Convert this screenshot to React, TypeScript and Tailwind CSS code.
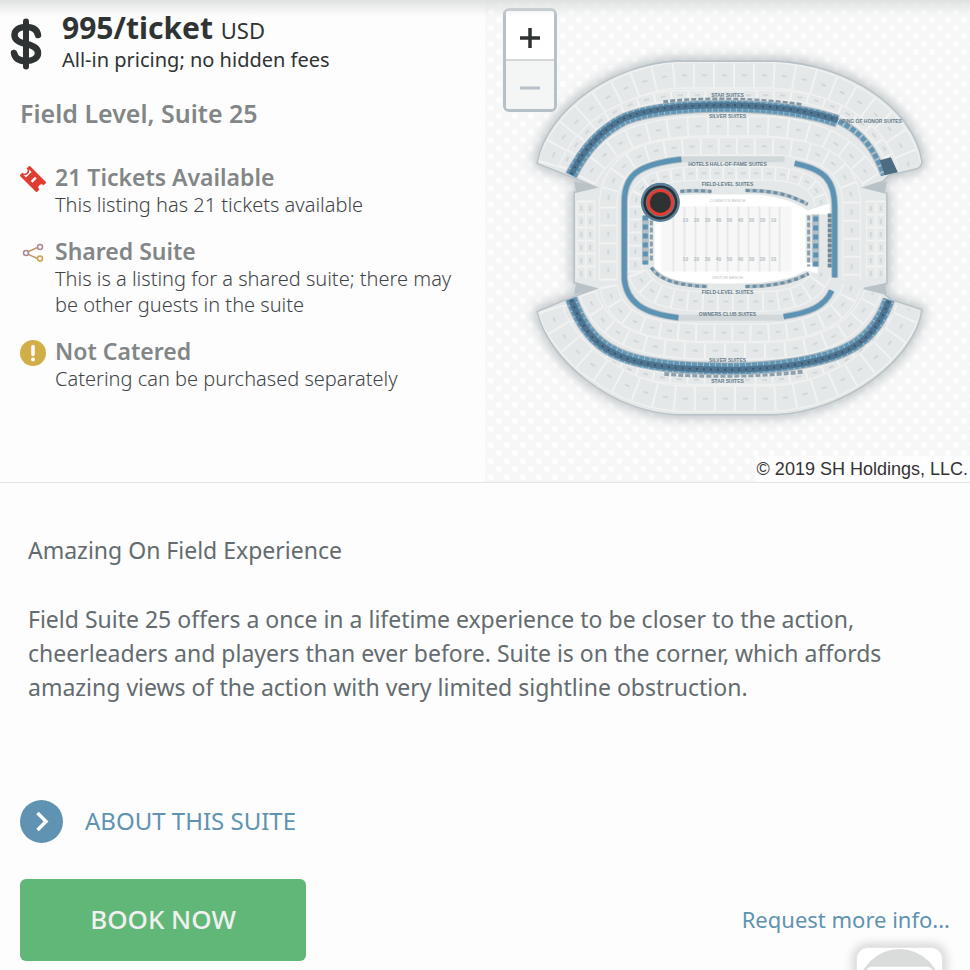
import { useState } from 'react';
import type { ReactNode } from 'react';

const TOP_BAND = 'M572 175 C584 151 601 131 625 119 C652 108 690 106 725 106 C768 106 805 110 838 121';
const HONOR_BAND = 'M839 121 C862 132 875 149 884 175';
const BOTTOM_BAND = 'M572 298 C581 322 593 341 616 352 C644 366 690 368 735 368 C783 367 822 360 844 350 C867 340 881 322 889 299';
const OUTLINE =
  'M538 163 C548 108 615 64 676 61 H776 C848 64 914 108 922 161 Q922 168 915 169 L889 175 L883 181 L864 187 L887 193 V283 L864 288 L884 293 L891 299 L922 309 C915 358 848 410 776 414 H676 C610 409 550 360 538 311 L567 299 L597 288 L575 282 V192 L597 187 L576 178 Z';

interface RowProps {
  d: string;
  width: number;
  step: number;
}

// One row of seating blocks: dividers plus a section mark in each block
function SeatRow({ d, width, step }: RowProps) {
  return (
    <g fill="none">
      <path d={d} stroke="#eff0f0" strokeWidth={width + 3} />
      <path d={d} stroke="#e5e8e8" strokeWidth={width} />
      <path d={d} stroke="#f1f2f2" strokeWidth={width} strokeDasharray={`2 ${step - 2}`} />
      <path d={d} stroke="#d3d7d8" strokeWidth="2" strokeDasharray={`5 ${step - 5}`} strokeDashoffset={-(step / 2 - 1)} />
    </g>
  );
}

const ROWS: RowProps[] = [
  { d: 'M551 165 C563 119 622 78 680 75 H772 C836 78 896 114 909 166', width: 24, step: 20 },
  { d: 'M564 168 C580 128 620 98 680 95 H780 C838 98 878 125 894 168', width: 8, step: 17 },
  { d: 'M587 180 C603 147 632 128 700 126 H765 C820 128 850 145 873 182', width: 18, step: 20 },
  { d: 'M609 280 V200 C613 160 645 147 700 146 H770 C820 148 848 162 852 200 V280', width: 16, step: 18 },
  { d: 'M636 272 V203 C640 180 660 174 700 173 H765 C800 174 818 181 822 204', width: 12, step: 13 },
  { d: 'M638 272 C646 294 670 300 705 301 H760 C795 301 815 292 822 272', width: 18, step: 15 },
  { d: 'M609 285 C616 320 645 331 700 332 H765 C815 330 845 315 852 285', width: 16, step: 18 },
  { d: 'M588 292 C602 334 640 349 700 350 H765 C820 349 858 332 873 292', width: 15, step: 20 },
  { d: 'M564 305 C581 355 630 377 690 379 H770 C830 377 880 348 896 306', width: 8, step: 17 },
  { d: 'M551 308 C564 351 622 395 682 398 H772 C838 395 896 352 909 308', width: 24, step: 20 },
  { d: 'M582 200 V278', width: 7, step: 13 },
  { d: 'M591 200 V278', width: 7, step: 13 },
  { d: 'M871 200 V278', width: 7, step: 13 },
  { d: 'M881 200 V278', width: 7, step: 13 },
];

const LABELS = [
  { x: 728, y: 97, text: 'STAR SUITES' },
  { x: 728, y: 118, text: 'SILVER SUITES' },
  { x: 872, y: 123, text: 'RING OF HONOR SUITES' },
  { x: 728, y: 166, text: 'HOTELS HALL-OF-FAME SUITES' },
  { x: 728, y: 186, text: 'FIELD-LEVEL SUITES' },
  { x: 728, y: 293, text: 'FIELD-LEVEL SUITES' },
  { x: 728, y: 315, text: 'OWNERS CLUB SUITES' },
  { x: 728, y: 361, text: 'SILVER SUITES' },
  { x: 728, y: 382, text: 'STAR SUITES' },
];

const YARDS = [10, 20, 30, 40, 50, 40, 30, 20, 10];

// darkShift moves the dark lane towards the outside of the bowl
function SuiteBand({ d, darkShift }: { d: string; darkShift: number }) {
  return (
    <g fill="none">
      <path d={d} stroke="#aebac2" strokeWidth="13" />
      <path d={d} stroke="#6197b7" strokeWidth="11" strokeDasharray="5 1" />
      <g transform={`translate(0 ${darkShift})`}>
        <path d={d} stroke="#4d7592" strokeWidth="6" />
        <path d={d} stroke="#3e566a" strokeWidth="2" strokeDasharray="2 5" />
      </g>
    </g>
  );
}

function StadiumMap() {
  return (
    <svg viewBox="486 0 484 481" className="block w-full" role="img" aria-label="Stadium seating map">
      <defs>
        <pattern id="dots" width="16" height="16" patternUnits="userSpaceOnUse">
          <rect width="16" height="16" fill="#f7f7f7" />
          <circle cx="4" cy="4" r="3" fill="#fefefe" />
          <circle cx="12" cy="12" r="3" fill="#fefefe" />
        </pattern>
        <filter id="glow" x="-10%" y="-10%" width="120%" height="120%">
          <feGaussianBlur stdDeviation="6" />
        </filter>
        <clipPath id="bowl">
          <path d={OUTLINE} />
        </clipPath>
      </defs>
      <rect x="486" width="484" height="482" fill="url(#dots)" />
      <path d={OUTLINE} fill="#a6afb3" stroke="#a6afb3" strokeWidth="7" filter="url(#glow)" opacity="0.75" />
      <path d={OUTLINE} fill="#e5e8e8" />
      <g clipPath="url(#bowl)">
        {ROWS.map(row => <SeatRow key={row.d} {...row} />)}
      </g>
      <path d={OUTLINE} fill="none" stroke="#b9c2c7" strokeWidth="1.5" />
      <path d="M575 181 L598 187 L577 192 Z M577 283 L598 288 L575 294 Z M887 181 L864 187 L885 192 Z M885 283 L864 288 L887 294 Z" fill="#b9c2c7" />

      {/* Upper and lower suites */}
      <path d="M664 102 C700 98 755 98 803 105" fill="none" stroke="#8195a3" strokeWidth="4" strokeDasharray="5 2" />
      <path d="M665 373 C700 376 755 376 803 371" fill="none" stroke="#8fa1ad" strokeWidth="4" strokeDasharray="5 2" />
      <SuiteBand d={TOP_BAND} darkShift={-1} />
      <SuiteBand d={BOTTOM_BAND} darkShift={1} />
      <path d={HONOR_BAND} fill="none" stroke="#b0bcc4" strokeWidth="7" />
      <path d={HONOR_BAND} fill="none" stroke="#5f95b5" strokeWidth="5" strokeDasharray="5 2" />
      <path d="M880 160 L891 157 L898 172 L885 175 Z" fill="#4c6c82" />

      {/* Club ring */}
      <g fill="none">
        <path d="M682 159 H785 M678 317 H784" stroke="#d2d7d9" strokeWidth="6" />
        <g stroke="#b4c0c8" strokeWidth="7">
          <path d="M682 159 C638 164 625 175 625 202 V278 C627 301 643 313 679 317" />
          <path d="M795 163 C825 169 835 180 835 207 V277 M832 290 C825 306 810 312 784 316" />
        </g>
        <g stroke="#5b93b4" strokeWidth="5">
          <path d="M682 159 C638 164 625 175 625 202 V278 C627 301 643 313 679 317" />
          <path d="M795 163 C825 169 835 180 835 207 V277 M832 290 C825 306 810 312 784 316" />
        </g>
      </g>

      {/* Field */}
      <path d="M655 210 C660 198 672 194 700 194 H752 C782 195 798 204 808 210 L830 203 V214 H806 V262 H818 V273 L806 270 C790 280 765 283 728 283 C690 283 666 281 655 266 Z" fill="#ffffff" />
      <rect x="662" y="206" width="130" height="65" fill="#f7f7f7" />
      <path d="M674 206 V271 M685 206 V271 M696 206 V271 M707 206 V271 M718 206 V271 M728 206 V271 M739 206 V271 M749 206 V271 M760 206 V271 M770 206 V271 M780 206 V271" stroke="#e7e9e9" strokeWidth="2" />
      <g fontSize="5" fontWeight="700" fill="#b5bdc2" textAnchor="middle" fontFamily="Liberation Sans, sans-serif">
        {YARDS.map((yard, i) => (
          <g key={i}>
            <text x={686 + i * 11} y="222">{yard}</text>
            <text x={686 + i * 11} y="260">{yard}</text>
          </g>
        ))}
        <text x="728" y="202" fontSize="4" fontWeight="400">COWBOYS BENCH</text>
        <text x="728" y="278" fontSize="4" fontWeight="400">VISITOR BENCH</text>
      </g>
      <g fill="none" strokeWidth="4">
        <path d="M681 191 C690 190 700 190 712 191 M746 190 C775 190 792 195 808 204" stroke="#b3bfc6" />
        <path d="M652 267 C660 280 680 285 708 286 M746 286 C775 286 794 281 809 273" stroke="#b3bfc6" />
        <path d="M681 191 C690 190 700 190 712 191 M746 190 C775 190 792 195 808 204" stroke="#6d8fa5" strokeWidth="3" strokeDasharray="4 3" />
        <path d="M652 267 C660 280 680 285 708 286 M746 286 C775 286 794 281 809 273" stroke="#6d8fa5" strokeWidth="3" strokeDasharray="4 3" />
        <path d="M646 215 V264 M816 214 V266" stroke="#b3bfc6" strokeWidth="7" />
        <path d="M646 215 V264 M816 216 V266" stroke="#5b93b4" strokeWidth="5" strokeDasharray="5 4" />
        <path d="M652 220 V262 M809 215 V266" stroke="#8c9ea9" strokeWidth="3" strokeDasharray="5 2" />
        <path d="M830 213 V267" stroke="#6d8798" strokeWidth="4" strokeDasharray="4 1" />
      </g>

      <g fontSize="5" fontWeight="700" fill="#667c8a" textAnchor="middle" fontFamily="Liberation Sans, sans-serif">
        {LABELS.map(l => <text key={l.y} x={l.x} y={l.y}>{l.text}</text>)}
      </g>

      {/* Selected suite */}
      <circle cx="661" cy="202" r="19.5" fill="#587e99" />
      <circle cx="661" cy="202" r="17" fill="#2b3033" />
      <circle cx="661" cy="202" r="14.5" fill="#587e99" />
      <circle cx="661" cy="202" r="13.5" fill="#e13d30" />
      <circle cx="661" cy="202" r="10.5" fill="#2f3232" />
    </svg>
  );
}

function DollarIcon() {
  return (
    <svg width="32" height="52" viewBox="0 0 32 52" fill="none" stroke="#2f3333" strokeLinecap="round" aria-hidden="true">
      <path d="M16 3.500 V48.500" strokeWidth="6" />
      <path d="M28 17 C27 11 22 9 16 9 C9 9 4.500 12 4.500 17 C4.500 22.500 9 24.500 16 26 C23 27.500 28 29.500 28 35 C28 40 23 43 16 43 C9 43 5 40 4 35" strokeWidth="6.500" />
    </svg>
  );
}

function TicketIcon() {
  return (
    <svg width="26" height="26" viewBox="0 0 26 26" aria-hidden="true">
      <g transform="rotate(45 13 13)">
        <path d="M1 6 H25 V10 A3 3 0 0 0 25 16 V20 H1 V16 A3 3 0 0 0 1 10 Z" fill="#e03c31" />
        <path d="M3.500 9 H7 V17 H3.500 C6.500 15 6.500 11 3.500 9 Z" fill="#fdfdfd" />
        <path d="M14 10 V16" stroke="#fdfdfd" strokeWidth="2.500" />
      </g>
    </svg>
  );
}

function ShareIcon() {
  return (
    <svg width="26" height="26" viewBox="0 0 26 26" fill="none" strokeWidth="1.500" aria-hidden="true">
      <path d="M7.500 12 L17.500 7.500 M7.500 14 L17.500 18.500" stroke="#c29a6a" />
      <circle cx="6" cy="13" r="2.500" stroke="#a8899a" />
      <circle cx="20" cy="7" r="2.500" stroke="#a8899a" />
      <circle cx="20" cy="18.500" r="2.500" stroke="#cba04a" />
    </svg>
  );
}

function NoticeIcon() {
  return (
    <svg width="26" height="26" viewBox="0 0 26 26" aria-hidden="true">
      <circle cx="13" cy="13" r="13" fill="#d2ae48" />
      <path d="M13 6.500 V14.500" stroke="#fff" strokeWidth="3.500" strokeLinecap="round" />
      <circle cx="13" cy="19.500" r="2" fill="#fff" />
    </svg>
  );
}

function Feature({ icon, title, children }: { icon: ReactNode; title: string; children: ReactNode }) {
  return (
    <li className="flex gap-[9px]">
      <span className="shrink-0 pt-1">{icon}</span>
      <div>
        <h3 className="text-[23px] leading-[30px] font-semibold text-[#828686]">{title}</h3>
        <p className="text-[20px] leading-[26px] font-light text-[#3d4447]">{children}</p>
      </div>
    </li>
  );
}

export default function App() {
  const [zoom, setZoom] = useState(0);

  return (
    <div className="relative min-h-screen overflow-hidden bg-[#fdfdfd] font-['Noto_Sans',sans-serif]">
      <div className="pointer-events-none absolute inset-x-0 top-0 z-10 h-4 bg-linear-to-b from-[#dfe1e1] to-transparent" />

      <section className="grid grid-cols-2 border-b border-[#e2e4e4]">
        <div className="px-5 pt-3">
          <div className="-ml-[10px] flex gap-5">
            <span className="shrink-0 pt-1.5"><DollarIcon /></span>
            <div className="text-[#2f3333]">
              <p className="text-[30px] leading-8 font-bold">995/ticket <span className="text-[22px] font-normal">USD</span></p>
              <p className="text-[20px] leading-7">All-in pricing; no hidden fees</p>
            </div>
          </div>
          <h2 className="mt-[23px] text-[25px] leading-8 font-semibold text-[#828686]">Field Level, Suite 25</h2>
          <ul className="mt-[33px] space-y-[18px]">
            <Feature icon={<TicketIcon />} title="21 Tickets Available">This listing has 21 tickets available</Feature>
            <Feature icon={<ShareIcon />} title="Shared Suite">This is a listing for a shared suite; there may be other guests in the suite</Feature>
            <Feature icon={<NoticeIcon />} title="Not Catered">Catering can be purchased separately</Feature>
          </ul>
        </div>

        <div className="relative">
          <StadiumMap />
          <div className="absolute top-2 left-[18px] w-[54px] overflow-hidden rounded-md border-3 border-[#b6c0c7]">
            <button
              aria-label="Zoom in"
              onClick={() => setZoom(zoom + 1)}
              className="flex h-[50px] w-full items-center justify-center border-b-2 border-[#d3d7d9] bg-white pt-1.5"
            >
              <svg width="22" height="22" viewBox="0 0 22 22" stroke="#2f3333" strokeWidth="3.500"><path d="M1 11 H21 M11 1 V21" /></svg>
            </button>
            <button
              aria-label="Zoom out"
              onClick={() => setZoom(Math.max(0, zoom - 1))}
              className="flex h-12 w-full items-center justify-center bg-[#f4f5f5] pt-1.5"
            >
              <svg width="22" height="22" viewBox="0 0 22 22" stroke="#b6c0c7" strokeWidth="3"><path d="M1 11 H21" /></svg>
            </button>
          </div>
          <p className="absolute right-0 bottom-0 bg-white/70 px-0.5 font-['Liberation_Sans',sans-serif] text-[18px] leading-[26px] text-[#333]">© 2019 SH Holdings, LLC.</p>
        </div>
      </section>

      <section className="px-7 pt-[50px] text-[23px] leading-[34px] text-[#636b6f]">
        <p>Amazing On Field Experience</p>
        <p className="mt-[35px]">
          Field Suite 25 offers a once in a lifetime experience to be closer to the action, cheerleaders and players than ever before. Suite is on the corner, which affords amazing views of the action with very limited sightline obstruction.
        </p>
      </section>

      <section className="px-5 pt-24">
        <button className="flex items-center gap-[22px] text-[24px] text-[#5f93b1]">
          <svg width="43" height="43" viewBox="0 0 43 43" fill="none" aria-hidden="true">
            <circle cx="21.500" cy="21.500" r="21.500" fill="#5f93b1" />
            <path d="M17.500 13 L26 21.500 L17.500 30" stroke="#fff" strokeWidth="3.500" />
          </svg>
          ABOUT THIS SUITE
        </button>
        <div className="mt-9 flex items-center justify-between">
          <button className="h-[82px] w-[286px] rounded-md bg-[#61b778] text-[26px] font-medium text-[#f0f0f0]">BOOK NOW</button>
          <a href="#info" className="text-[22px] text-[#5f93b1]">Request more info...</a>
        </div>
      </section>

      {/* Floating chat button, partly below the fold */}
      <button aria-label="Open chat" className="fixed right-[27px] -bottom-16 h-[87px] w-[87px] rounded-xl border border-[#e4e6e6] bg-white shadow-[0_0_10px_4px_rgba(0,0,0,0.15)]">
        <svg viewBox="0 0 86 86" className="size-full" aria-hidden="true">
          <circle cx="43" cy="43" r="42" fill="#dadcdc" />
          <rect x="9" y="19" width="68" height="40" rx="6" fill="#fff" />
        </svg>
      </button>
    </div>
  );
}
